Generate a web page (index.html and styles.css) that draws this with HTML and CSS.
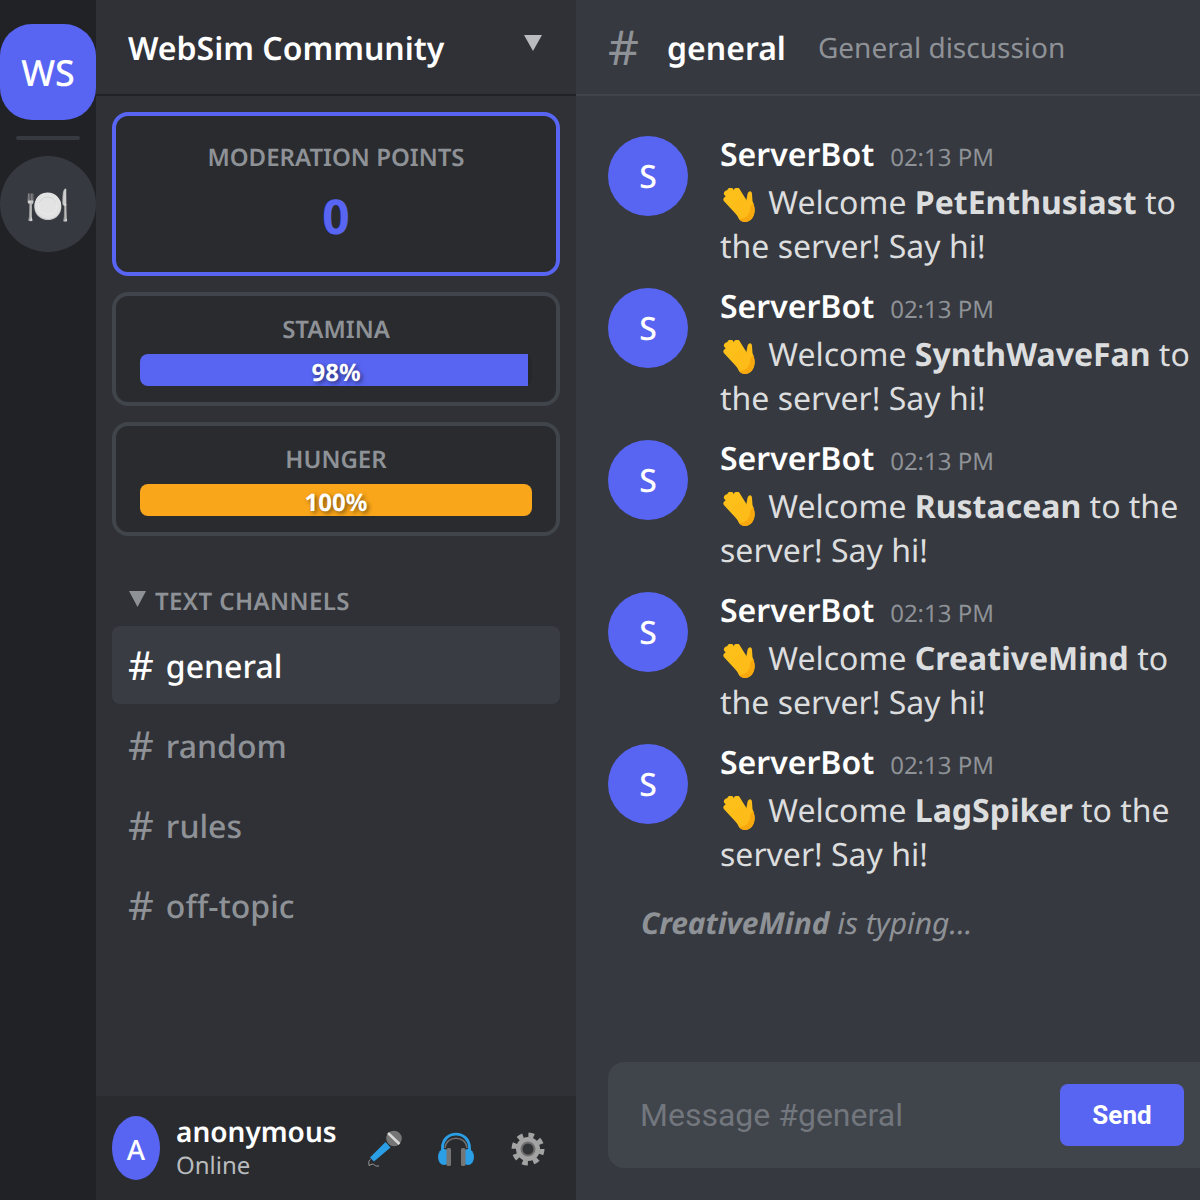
FILE: index.html
```html
<!DOCTYPE html>
<html lang="en">
<head>
<meta charset="utf-8">
<title>WebSim Community</title>
<link rel="stylesheet" href="styles.css">
</head>
<body>
<svg class="sprite" aria-hidden="true">
  <symbol id="wave" viewBox="5 8 40 37">
    <path d="M24 33 11.500 19.500M25 27 12 13.500M27 25 15.500 10.500M31 25 22 10.500" fill="none" stroke="#fdc01a" stroke-width="6" stroke-linecap="round"/>
    <path d="M17 26C18 21 24 18 29 20L31 22 32.500 14C33.500 10 37 10.500 37 14L37.500 21C40.500 28 40.500 34 37 38.500 33.500 43 27 43 24 39Z" fill="#fdbc17"/>
    <path d="M38 23C40.500 28 40 34 37 38.500 33.500 43 27 43 24 39 30 39.500 36 34 35 27Z" fill="#f7a80f"/>
  </symbol>
</svg>
<div class="app">
  <nav class="servers">
    <div class="server active">WS</div>
    <div class="divider"></div>
    <div class="server emoji"><span class="plate">🍽️</span></div>
  </nav>
  <aside class="channels">
    <header class="server-head">
      <h1>WebSim Community</h1>
      <span class="caret"></span>
    </header>
    <section class="stats">
      <div class="stat points">
        <div class="stat-label">MODERATION POINTS</div>
        <div class="points-value">0</div>
      </div>
      <div class="stat">
        <div class="stat-label">STAMINA</div>
        <div class="track"><div class="fill blue" style="width:99%"></div><span class="pct">98%</span></div>
      </div>
      <div class="stat">
        <div class="stat-label">HUNGER</div>
        <div class="track"><div class="fill orange" style="width:100%"></div><span class="pct">100%</span></div>
      </div>
    </section>
    <section class="channel-list">
      <div class="section-title"><span class="tri"></span><span>TEXT CHANNELS</span></div>
      <div class="channel selected"><span class="hash">#</span><span>general</span></div>
      <div class="channel"><span class="hash">#</span><span>random</span></div>
      <div class="channel"><span class="hash">#</span><span>rules</span></div>
      <div class="channel"><span class="hash">#</span><span>off-topic</span></div>
    </section>
    <footer class="user">
      <div class="user-avatar">A</div>
      <div class="user-info">
        <div class="user-name">anonymous</div>
        <div class="user-status">Online</div>
      </div>
      <div class="user-tools">
        <svg class="tool" viewBox="3 3 40 40" role="img" aria-label="Microphone">
          <path d="M24.500 17 29.500 22.500 13 36.500 9 32.500Z" fill="#2b9fe6"/>
          <path d="M9.500 34.500C7 36 8 38.500 8 40.500 11 39 12 38.500 13.500 40 15 41.500 16.500 41 18 41" fill="none" stroke="#b5b5b5" stroke-width=".8"/>
          <circle cx="33" cy="13.500" r="7.800" fill="#757575"/>
          <path d="M27 8 38.500 19" stroke="#d8d8d8" stroke-width="2.500"/>
        </svg>
        <svg class="tool" viewBox="4 3 40 40" role="img" aria-label="Headphones">
          <path d="M10.500 28V22C10.500 3.500 37.500 3.500 37.500 22V28" transform="translate(0 1)" fill="none" stroke="#2b9fe6" stroke-width="2.800"/>
          <path d="M13 23C14 10 34 10 35 23" fill="none" stroke="#6f6f6f" stroke-width="1.500"/>
          <ellipse cx="12" cy="32" rx="6" ry="8" fill="#2b9fe6"/>
          <ellipse cx="36" cy="32" rx="6" ry="8" fill="#2b9fe6"/>
          <rect x="14.500" y="23" width="4.500" height="18" rx="1.500" fill="#757575"/>
          <rect x="29" y="23" width="4.500" height="18" rx="1.500" fill="#757575"/>
        </svg>
        <svg class="tool" viewBox="4 3 40 40" role="img" aria-label="Settings">
          <circle cx="24" cy="24" r="14" fill="none" stroke="#a3a3a3" stroke-width="5" stroke-dasharray="5.500 5.500"/>
          <circle cx="24" cy="24" r="12" fill="#a3a3a3"/>
          <circle cx="24" cy="24" r="7.500" fill="#707070"/>
          <circle cx="24" cy="24" r="5.500" fill="#333438"/>
        </svg>
      </div>
    </footer>
  </aside>
  <main class="chat">
    <header class="chat-head">
      <span class="chat-hash">#</span>
      <span class="chat-name">general</span>
      <span class="chat-topic">General discussion</span>
    </header>
    <div class="messages">
      <article class="msg">
        <div class="avatar">S</div>
        <div class="msg-body">
          <div class="msg-meta"><span class="author">ServerBot</span><span class="time">02:13 PM</span></div>
          <p class="text"><svg class="hand" role="img" aria-label="Waving hand"><use href="#wave"/></svg> Welcome <strong>PetEnthusiast</strong> to the server! Say hi!</p>
        </div>
      </article>
      <article class="msg">
        <div class="avatar">S</div>
        <div class="msg-body">
          <div class="msg-meta"><span class="author">ServerBot</span><span class="time">02:13 PM</span></div>
          <p class="text"><svg class="hand" role="img" aria-label="Waving hand"><use href="#wave"/></svg> Welcome <strong>SynthWaveFan</strong> to the server! Say hi!</p>
        </div>
      </article>
      <article class="msg">
        <div class="avatar">S</div>
        <div class="msg-body">
          <div class="msg-meta"><span class="author">ServerBot</span><span class="time">02:13 PM</span></div>
          <p class="text"><svg class="hand" role="img" aria-label="Waving hand"><use href="#wave"/></svg> Welcome <strong>Rustacean</strong> to the server! Say hi!</p>
        </div>
      </article>
      <article class="msg">
        <div class="avatar">S</div>
        <div class="msg-body">
          <div class="msg-meta"><span class="author">ServerBot</span><span class="time">02:13 PM</span></div>
          <p class="text"><svg class="hand" role="img" aria-label="Waving hand"><use href="#wave"/></svg> Welcome <strong>CreativeMind</strong> to the server! Say hi!</p>
        </div>
      </article>
      <article class="msg">
        <div class="avatar">S</div>
        <div class="msg-body">
          <div class="msg-meta"><span class="author">ServerBot</span><span class="time">02:13 PM</span></div>
          <p class="text"><svg class="hand" role="img" aria-label="Waving hand"><use href="#wave"/></svg> Welcome <strong>LagSpiker</strong> to the server! Say hi!</p>
        </div>
      </article>
      <div class="typing"><strong>CreativeMind</strong> is typing...</div>
    </div>
    <div class="composer">
      <input class="composer-input" type="text" placeholder="Message #general">
      <button class="send" type="button">Send</button>
    </div>
  </main>
</div>
</body>
</html>
```
FILE: styles.css
```css
* { box-sizing: border-box; }
html, body { margin: 0; height: 100%; background: #36393f; overflow: hidden; }
body { font-family: "Noto Sans", sans-serif; color: #dcddde; text-rendering: geometricPrecision; }
.sprite { display: none; }
.app { display: flex; width: 1200px; height: 1200px; overflow: hidden; }

.servers { width: 96px; flex: none; background: #202225; padding-top: 24px; display: flex; flex-direction: column; align-items: center; gap: 16px; }
.server { width: 96px; height: 96px; flex: none; border-radius: 50%; background: #36393f; color: #fff; display: flex; align-items: center; justify-content: center; font-size: 36px; font-weight: 500; }
.server.active { background: #5865f2; border-radius: 32px; }
.server.emoji { font-size: 36px; }
.plate { opacity: .9; }
.divider { width: 64px; height: 4px; background: #36393f; border-radius: 2px; flex: none; }

.channels { width: 480px; flex: none; background: #2f3136; display: flex; flex-direction: column; }
.server-head { height: 96px; flex: none; padding: 2px 34px 0 32px; border-bottom: 2px solid #202225; display: flex; justify-content: space-between; align-items: center; }
.server-head h1 { margin: 0; font-size: 32px; font-weight: 600; color: #fff; }
.caret { width: 18px; height: 16px; margin-top: -10px; background: #b9bbbe; clip-path: polygon(0 0, 100% 0, 50% 100%); }

.stats { padding: 16px 16px 0; display: flex; flex-direction: column; gap: 16px; }
.stat { border: 4px solid #40444b; border-radius: 16px; background: #292b2f; padding: 18px 24px 16px; text-align: center; height: 114px; }
.stat.points { border-color: #5865f2; height: 164px; padding-top: 26px; }
.stat-label { font-size: 24px; line-height: 32px; color: #8e9297; font-weight: 600; }
.points-value { font-size: 48px; line-height: 64px; font-weight: 700; color: #5865f2; margin-top: 11px; }
.track { position: relative; height: 32px; margin-top: 8px; border-radius: 8px; background: #25272b; }
.fill { height: 100%; }
.fill.blue { background: #5865f2; border-radius: 8px 0 0 8px; }
.fill.orange { background: #faa61a; border-radius: 8px; }
.pct { position: absolute; inset: 2px 0 0; text-align: center; line-height: 34px; font-size: 24px; font-weight: 700; color: #fff; text-shadow: 2px 2px 4px rgba(0,0,0,.5); }

.channel-list { padding: 0 16px; margin-top: 49px; flex: 1; display: flex; flex-direction: column; gap: 2px; }
.section-title { display: flex; align-items: center; gap: 9px; padding-left: 17px; font-size: 24px; line-height: 34px; letter-spacing: .4px; color: #8e9297; font-weight: 600; margin-bottom: 5px; height: 34px; }
.tri { width: 17px; height: 16px; margin-top: -6px; background: #8e9297; clip-path: polygon(0 0, 100% 0, 50% 100%); }
.channel { height: 78px; border-radius: 8px; padding: 2px 16px 0; display: flex; align-items: center; gap: 12px; font-size: 32px; font-weight: 500; color: #8e9297; }
.channel.selected { background: #393c42; color: #fff; }
.hash { font-size: 40px; line-height: 44px; font-weight: 400; margin-bottom: 2px; }

.user { height: 104px; flex: none; background: #292b2f; padding: 0 28px 0 16px; display: flex; align-items: center; }
.user-avatar { width: 48px; height: 64px; flex: none; border-radius: 50%; background: #5865f2; color: #fff; display: flex; align-items: center; justify-content: center; font-size: 28px; font-weight: 500; padding-top: 4px; }
.user-info { margin: 2px 0 0 16px; flex: 1; }
.user-name { font-size: 28px; line-height: 34px; font-weight: 600; color: #fff; }
.user-status { font-size: 24px; line-height: 34px; color: #b9bbbe; }
.user-tools { display: flex; gap: 32px; }
.tool { width: 40px; height: 40px; display: block; }

.chat { width: 624px; flex: none; display: flex; flex-direction: column; background: #36393f; }
.chat-head { height: 96px; flex: none; padding: 2px 32px 0; border-bottom: 2px solid #40444b; display: flex; align-items: center; }
.chat-hash { font-size: 48px; color: #8e9297; width: 59px; margin-bottom: 2px; }
.chat-name { font-size: 32px; font-weight: 600; color: #fff; }
.chat-topic { font-size: 28px; color: #8e9297; margin-left: 32px; }

.messages { flex: 1; padding: 40px 0 0 32px; display: flex; flex-direction: column; }
.msg { display: flex; gap: 32px; height: 152px; }
.avatar { width: 80px; height: 80px; flex: none; border-radius: 50%; background: #5865f2; color: #fff; display: flex; align-items: center; justify-content: center; font-size: 32px; font-weight: 500; }
.msg-body { flex: 1; min-width: 0; }
.msg-meta { display: flex; align-items: baseline; gap: 16px; height: 45px; padding-top: 1px; }
.author { font-size: 32px; line-height: 36px; font-weight: 600; color: #fff; }
.time { font-size: 24px; color: #8e9297; }
.text { margin: 0; font-size: 32px; line-height: 44px; color: #dcddde; }
.text strong { font-weight: 700; color: #dcddde; }
.hand { width: 40px; height: 37px; margin: -4px 0; vertical-align: -7px; }
.typing { font-style: italic; font-size: 30px; line-height: 44px; color: #8e9297; padding-left: 33px; margin-top: 5px; }
.typing strong { font-weight: 700; letter-spacing: -.1px; }

.composer { margin: 0 0 32px 32px; width: 624px; height: 106px; flex: none; background: #40444b; border-radius: 16px 0 0 16px; display: flex; align-items: center; padding: 0 48px 0 32px; }
.composer-input { flex: 1; min-width: 0; background: none; border: 0; outline: 0; padding: 0; font-family: Roboto, sans-serif; font-size: 32px; color: #dcddde; }
.composer-input::placeholder { color: #72767d; opacity: 1; }
.send { width: 124px; height: 62px; flex: none; border: 0; border-radius: 8px; background: #5865f2; color: #fff; font-family: Roboto, sans-serif; font-size: 26px; font-weight: 700; }
```
